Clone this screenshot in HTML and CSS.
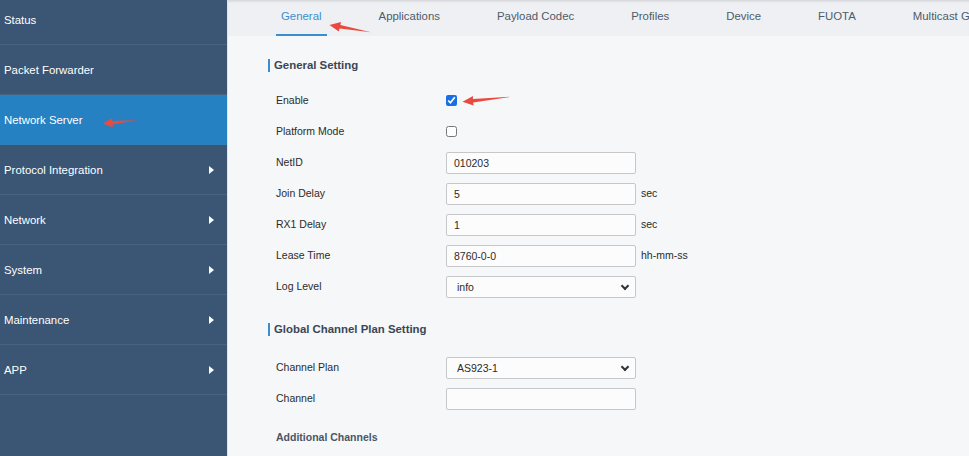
FILE: index.html
```html
<!DOCTYPE html>
<html lang="en">
<head>
<meta charset="utf-8">
<title>Network Server - General</title>
<link rel="stylesheet" href="styles.css">
</head>
<body>
<div class="app">
  <nav class="sidebar">
    <ul class="menu">
      <li class="menu-item"><span>Status</span></li>
      <li class="menu-item"><span>Packet Forwarder</span></li>
      <li class="menu-item active"><span>Network Server</span></li>
      <li class="menu-item"><span>Protocol Integration</span><i class="caret"></i></li>
      <li class="menu-item"><span>Network</span><i class="caret"></i></li>
      <li class="menu-item"><span>System</span><i class="caret"></i></li>
      <li class="menu-item"><span>Maintenance</span><i class="caret"></i></li>
      <li class="menu-item"><span>APP</span><i class="caret"></i></li>
    </ul>
  </nav>
  <main class="main">
    <div class="tabs">
      <span class="tab active">General</span>
      <span class="tab">Applications</span>
      <span class="tab">Payload Codec</span>
      <span class="tab">Profiles</span>
      <span class="tab">Device</span>
      <span class="tab">FUOTA</span>
      <span class="tab">Multicast Groups</span>
    </div>
    <div class="content">
      <h3 class="section-title">General Setting</h3>
      <div class="form form-general">
        <div class="row"><label class="label">Enable</label><input class="check" type="checkbox" checked></div>
        <div class="row"><label class="label">Platform Mode</label><input class="check" type="checkbox"></div>
        <div class="row"><label class="label">NetID</label><input class="field" type="text" value="010203"></div>
        <div class="row"><label class="label">Join Delay</label><input class="field" type="text" value="5"><span class="unit">sec</span></div>
        <div class="row"><label class="label">RX1 Delay</label><input class="field" type="text" value="1"><span class="unit">sec</span></div>
        <div class="row"><label class="label">Lease Time</label><input class="field" type="text" value="8760-0-0"><span class="unit">hh-mm-ss</span></div>
        <div class="row"><label class="label">Log Level</label><div class="select-wrap"><select class="field select"><option>info</option></select></div></div>
      </div>
      <h3 class="section-title second">Global Channel Plan Setting</h3>
      <div class="form form-channel">
        <div class="row"><label class="label">Channel Plan</label><div class="select-wrap"><select class="field select"><option>AS923-1</option></select></div></div>
        <div class="row"><label class="label">Channel</label><input class="field" type="text" value=""></div>
      </div>
      <div class="subtitle">Additional Channels</div>
    </div>
  </main>
  <svg class="annotations" width="969" height="456" viewBox="0 0 969 456" aria-hidden="true">
    <path d="M329.5 25 L341 22 L340.4 25 L371 32.2 L339.5 28.6 L338.8 31.6 Z"/>
    <path d="M462.5 101.8 L473 96 L472.9 99 L510.5 96.8 L473.2 102.4 L473.5 105.6 Z"/>
    <path d="M103 123.5 L112.2 118 L112.3 121 L137 120.3 L112.5 124.6 L112.8 127.6 Z"/>
  </svg>
</div>
</body>
</html>
```

FILE: styles.css
```css
* {
  box-sizing: border-box;
}

html, body {
  margin: 0;
  padding: 0;
  height: 100%;
  overflow: hidden;
}

body {
  font-family: "Liberation Sans", Arial, sans-serif;
  color: #2b2b2b;
  background: #f5f7f8;
}

.app {
  position: relative;
  display: flex;
  width: 969px;
  height: 456px;
}

/* Sidebar */
.sidebar {
  width: 228px;
  flex: none;
  background: #3b5574;
  border-right: 1px solid #dde4eb;
  overflow: hidden;
}

.menu {
  list-style: none;
  margin: -5px 0 0 0;
  padding: 0;
}

.menu-item {
  height: 50px;
  display: flex;
  align-items: center;
  justify-content: space-between;
  padding: 0 13px 0 4px;
  border-bottom: 1px solid #48627f;
  color: #ffffff;
  font-size: 11.4px;
}

.menu-item.active {
  background: #2681c3;
  border-bottom-color: #2f7fb8;
}

.caret {
  width: 0;
  height: 0;
  border-top: 4px solid transparent;
  border-bottom: 4px solid transparent;
  border-left: 5px solid #ffffff;
}

/* Main */
.main {
  flex: 1;
  min-width: 0;
  display: flex;
  flex-direction: column;
  background: #f5f7f8;
}

.tabs {
  height: 36px;
  flex: none;
  display: flex;
  gap: 47px;
  padding-left: 48px;
  background: #eef0f3;
  box-shadow: inset 0 3px 3px -2px rgba(0, 0, 0, 0.14);
  white-space: nowrap;
  overflow: hidden;
}

.tab {
  padding: 0 5px;
  line-height: 33px;
  height: 36px;
  font-size: 11.4px;
  color: #4f5b69;
  border-bottom: 2px solid transparent;
}

.tab.active {
  color: #3a8ed0;
  border-bottom-color: #3a8ed0;
}

.content {
  padding-left: 40px;
}

.section-title {
  margin: 23px 0 0 0;
  height: 13px;
  line-height: 13px;
  padding-left: 4px;
  border-left: 2px solid #3a8ed0;
  font-size: 11.4px;
  font-weight: bold;
  color: #3a4656;
}

.section-title.second {
  margin-top: 21px;
}

.form {
  padding-left: 8px;
}

.form-general {
  margin-top: 13px;
}

.form-channel {
  margin-top: 16px;
}

.row {
  height: 31px;
  display: flex;
  align-items: center;
}

.label {
  width: 170px;
  flex: none;
  font-size: 10.5px;
  color: #2b2b2b;
  position: relative;
  top: -1px;
}

.check {
  width: 11px;
  height: 11px;
  margin: 0;
  accent-color: #1a6fe3;
}

.field {
  width: 190px;
  height: 22px;
  margin: 0;
  padding: 0 7px;
  border: 1px solid #c5c7c9;
  border-radius: 2px;
  background: #fcfcfc;
  font-family: "Liberation Sans", Arial, sans-serif;
  font-size: 10.5px;
  color: #2b2b2b;
  outline: none;
}

.select-wrap {
  position: relative;
  width: 190px;
  height: 22px;
}

.select {
  -webkit-appearance: none;
  appearance: none;
  padding-left: 10px;
}

.select-wrap::after {
  content: "";
  position: absolute;
  right: 8px;
  top: 7px;
  width: 4px;
  height: 4px;
  border-right: 2px solid #333;
  border-bottom: 2px solid #333;
  transform: rotate(45deg);
  pointer-events: none;
}

.unit {
  margin-left: 5px;
  font-size: 10.5px;
  color: #2b2b2b;
  position: relative;
  top: -1px;
}

.subtitle {
  margin-top: 17px;
  padding-left: 8px;
  height: 13px;
  line-height: 13px;
  font-size: 10.5px;
  font-weight: bold;
  color: #4a5666;
}

/* Red annotation arrows drawn over the screenshot */
.annotations {
  position: absolute;
  left: 0;
  top: 0;
  pointer-events: none;
  fill: #e94a3f;
}
```
